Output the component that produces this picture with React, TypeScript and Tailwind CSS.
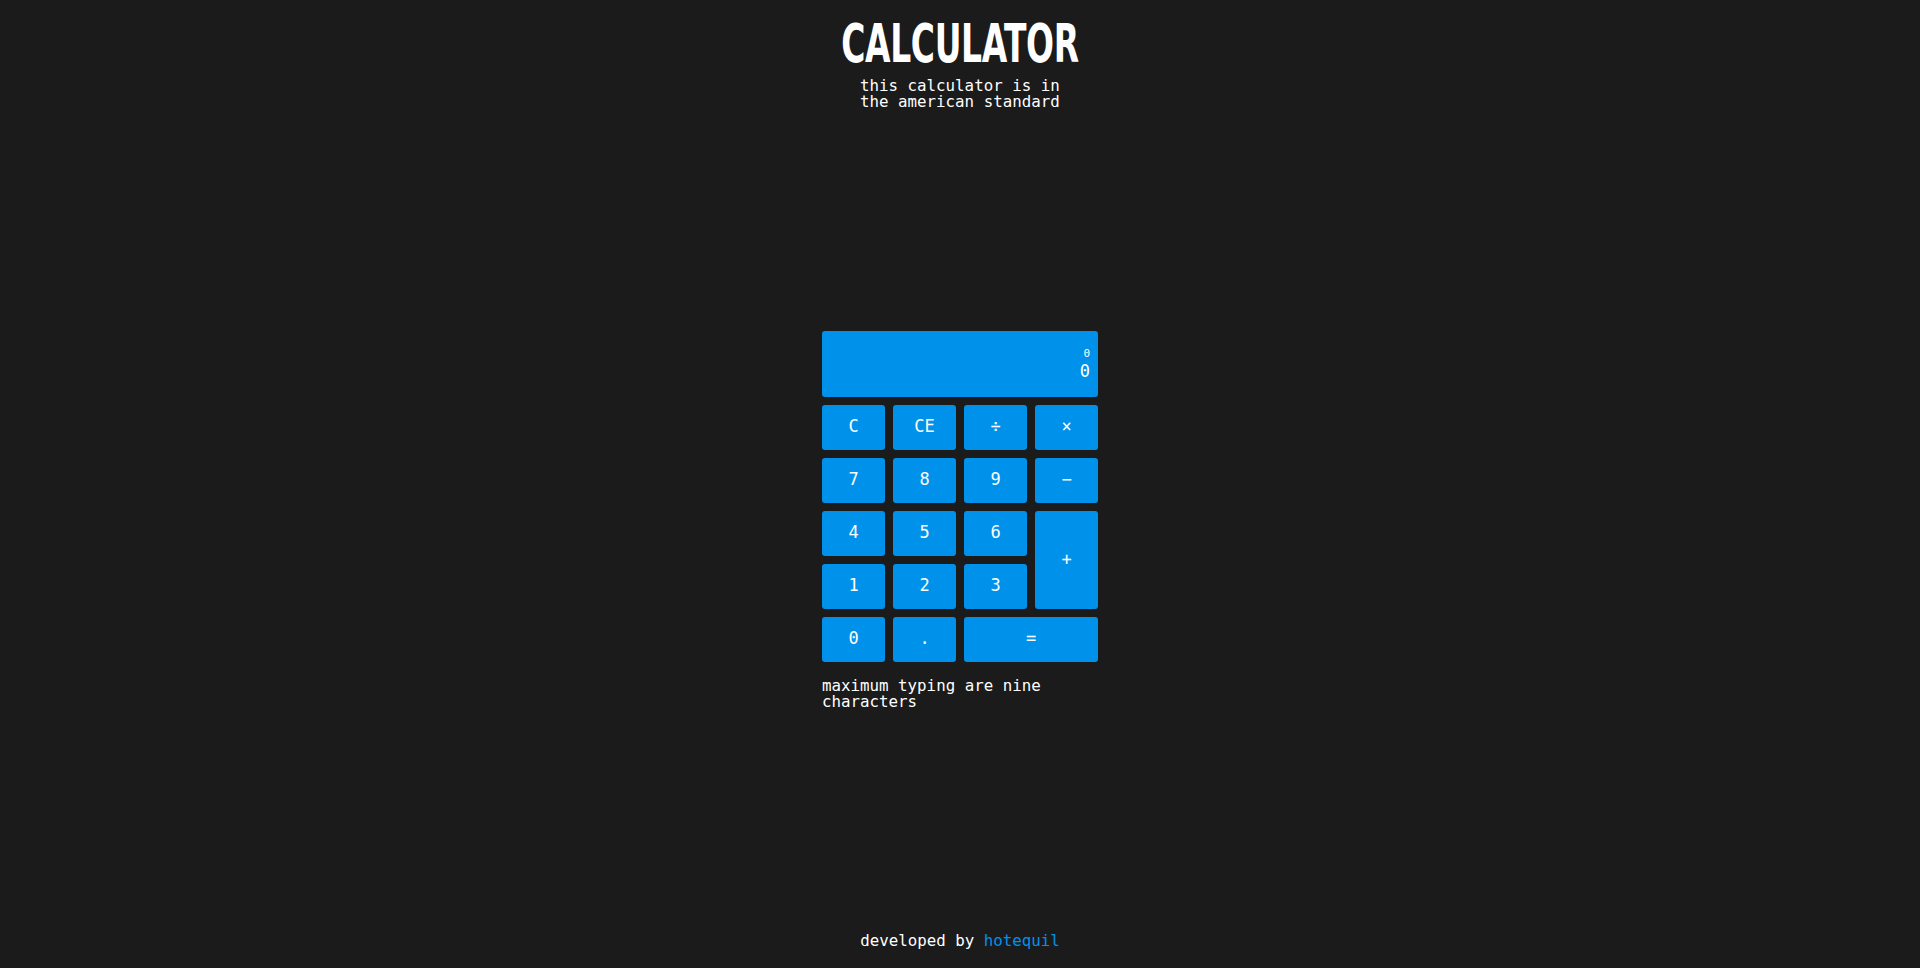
import React from 'react';

const mono = "font-['DejaVu_Sans_Mono','Liberation_Mono',monospace]";

function Key({ label, className = '' }: { label: string; className?: string }) {
  return (
    <button
      className={`flex items-center justify-center rounded-[3px] bg-[#0091ea] text-[17px] text-white ${className}`}
    >
      {label}
    </button>
  );
}

export default function App() {
  return (
    <div className={`flex min-h-screen flex-col bg-[#1b1b1b] text-white ${mono}`}>
      {/* Cabeçalho */}
      <header className="flex flex-col items-center pt-[17px]">
        <h1 className="scale-x-[0.69] font-['Liberation_Sans_Narrow','DejaVu_Sans_Condensed',sans-serif] text-[53px] font-bold leading-none tracking-[-0.5px]">
          CALCULATOR
        </h1>
        <p className="mt-[8px] w-[200px] text-[15.8px] leading-[16px]">
          this calculator is in the american standard
        </p>
      </header>

      {/* Calculadora */}
      <main className="flex flex-1 items-center justify-center pb-[3px]">
        <div className="w-[276px]">
          <div className="flex h-[66px] flex-col items-end justify-center rounded-[3px] bg-[#0091ea] px-[8px] pt-[1px]">
            <span className="text-[11px] leading-[14px]">0</span>
            <span className="text-[17px] leading-[20px]">0</span>
          </div>
          <div className="mt-[8px] grid grid-cols-4 grid-rows-[repeat(5,45px)] gap-[8px]">
            <Key label="C" />
            <Key label="CE" />
            <Key label="÷" />
            <Key label="×" />
            <Key label="7" />
            <Key label="8" />
            <Key label="9" />
            <Key label="−" />
            <Key label="4" />
            <Key label="5" />
            <Key label="6" />
            <Key label="+" className="row-span-2" />
            <Key label="1" />
            <Key label="2" />
            <Key label="3" />
            <Key label="0" />
            <Key label="." />
            <Key label="=" className="col-span-2" />
          </div>
          <p className="mt-[16px] text-[15.8px] leading-[16px]">maximum typing are nine characters</p>
        </div>
      </main>

      {/* Rodapé */}
      <footer className="flex justify-center pb-[19px] text-[15.8px] leading-[16px]">
        <p>
          developed by <a className="text-[#0091ea]">hotequil</a>
        </p>
      </footer>
    </div>
  );
}
